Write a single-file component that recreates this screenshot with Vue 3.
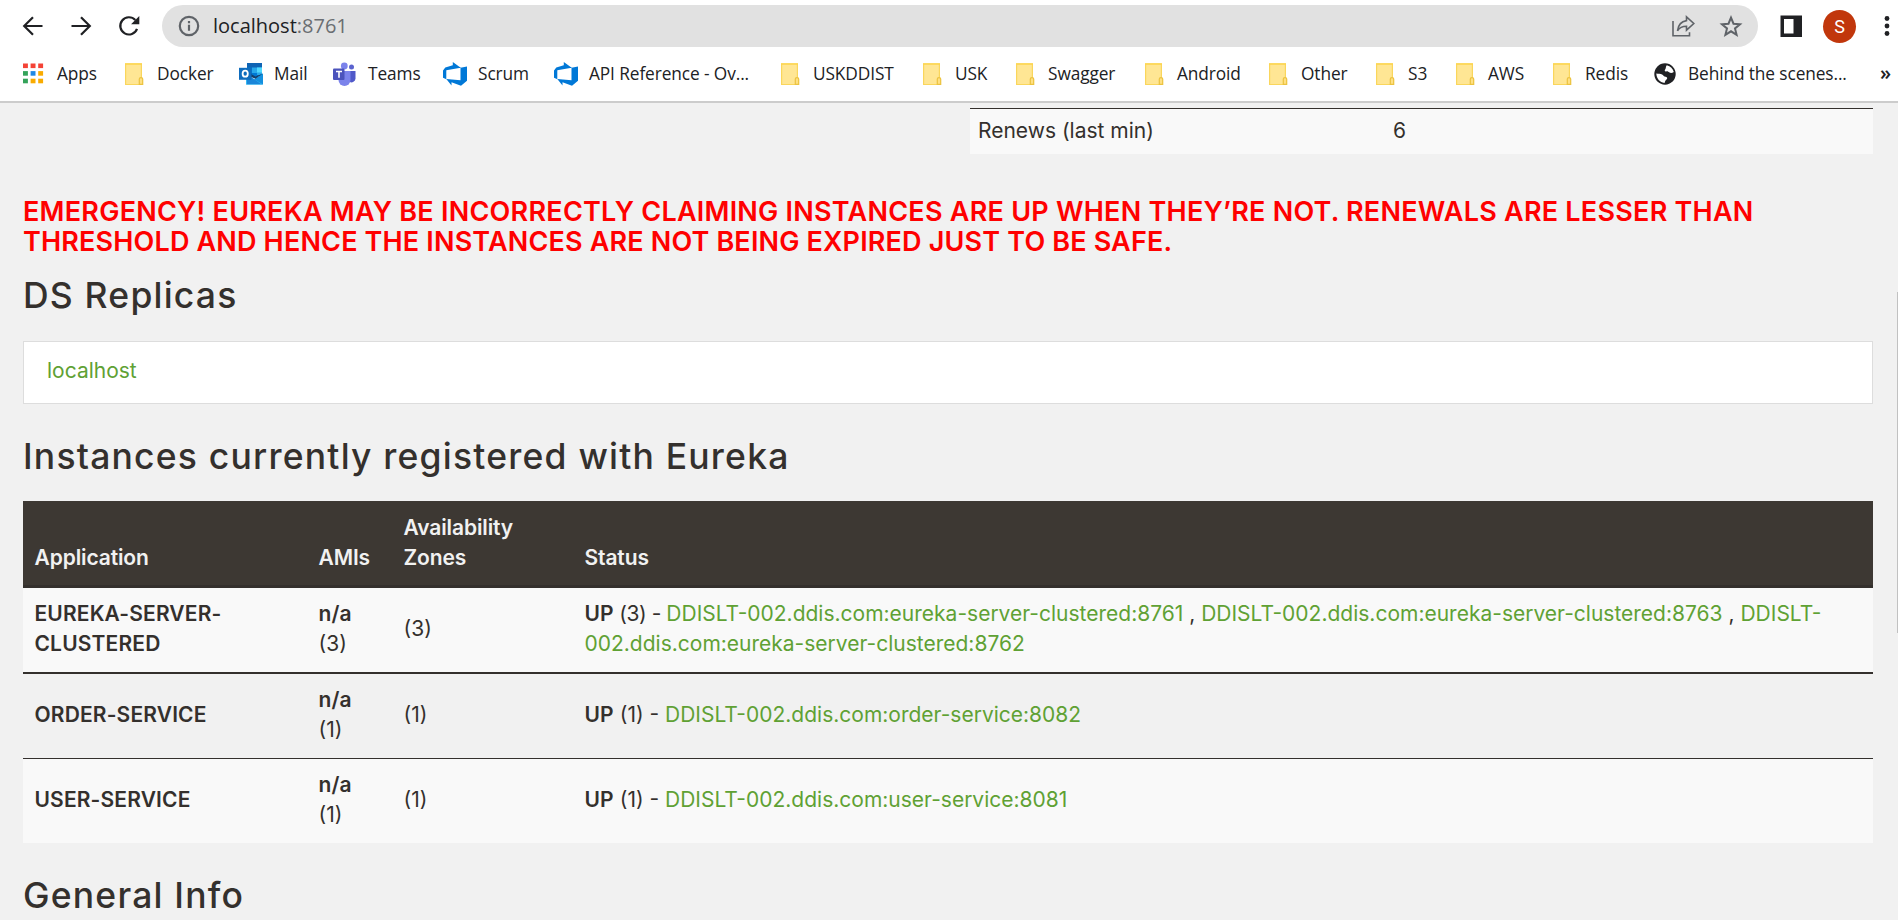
<script setup>
const bookmarks = [
  { icon: 'apps', label: 'Apps' },
  { icon: 'folder', label: 'Docker' },
  { icon: 'mail', label: 'Mail' },
  { icon: 'teams', label: 'Teams' },
  { icon: 'devops', label: 'Scrum' },
  { icon: 'devops', label: 'API Reference - Ov...' },
  { icon: 'folder', label: 'USKDDIST' },
  { icon: 'folder', label: 'USK' },
  { icon: 'folder', label: 'Swagger' },
  { icon: 'folder', label: 'Android' },
  { icon: 'folder', label: 'Other' },
  { icon: 'folder', label: 'S3' },
  { icon: 'folder', label: 'AWS' },
  { icon: 'folder', label: 'Redis' },
  { icon: 'globe', label: 'Behind the scenes...' }
]
const appDots = ['#f44336', '#f44336', '#f44336', '#34a35a', '#1e88e5', '#f9ab00', '#34a35a', '#f9ab00', '#f9ab00']

const host = 'DDISLT-002.ddis.com'
const apps = [
  { name: 'EUREKA-SERVER-CLUSTERED', count: 3, links: [8761, 8763, 8762].map(p => `${host}:eureka-server-clustered:${p}`) },
  { name: 'ORDER-SERVICE', count: 1, links: [`${host}:order-service:8082`] },
  { name: 'USER-SERVICE', count: 1, links: [`${host}:user-service:8081`] }
]
</script>

<template>
  <div class="window">
    <header class="chrome">
      <div class="toolbar">
        <svg class="ico" viewBox="0 0 24 24"><path d="M21.500 12H3.500M12 3.200 3.200 12l8.800 8.800" /></svg>
        <svg class="ico" viewBox="0 0 24 24"><path d="M2.500 12h18M12 3.200l8.800 8.800-8.800 8.800" /></svg>
        <svg class="ico" viewBox="0 0 24 24">
          <path d="M20 14.800A8.600 8.600 0 1 1 18.300 6.100" />
          <path class="solid" d="M22.300 2v8.200h-8.200z" />
        </svg>
        <div class="omnibox">
          <svg class="ico info" viewBox="0 0 24 24">
            <circle cx="12" cy="12" r="9.200" />
            <path d="M12 10.800v6M12 7v2.300" />
          </svg>
          <div class="url">localhost<span>:8761</span></div>
          <svg class="ico share" viewBox="0 0 24 24">
            <path d="M2 7v14.800h16.500v-3.500" />
            <path d="M15.500 2.800 22.800 9.500l-7.300 6.700v-4c-4.500 0-7 1.300-9 4.600.6-5.300 3.600-9.400 9-10.200z" />
          </svg>
          <svg class="ico star" viewBox="0 0 24 24">
            <path d="m12 3.600 2.500 6.100 6.500.5-5 4.200 1.600 6.400-5.600-3.500-5.600 3.500L8 14.400l-5-4.200 6.500-.5z" />
          </svg>
        </div>
        <svg class="ico panel" viewBox="0 0 24 24">
          <path class="solid" fill-rule="evenodd" d="M1.500 1.500h21.500v21.500H1.500zM5 5v14.500h9.500V5z" />
        </svg>
        <div class="avatar">S</div>
        <svg class="menu" viewBox="0 0 8 24">
          <circle cx="4" cy="4.500" r="2.400" /><circle cx="4" cy="12" r="2.400" /><circle cx="4" cy="19.500" r="2.400" />
        </svg>
      </div>

      <nav class="bookmarks">
        <div v-for="b in bookmarks" :key="b.label" class="bookmark">
          <svg v-if="b.icon === 'apps'" class="bm" viewBox="0 0 24 24">
            <rect v-for="(c, i) in appDots" :key="i" :x="1 + (i % 3) * 7.600" :y="1.500 + Math.floor(i / 3) * 7.600" width="4.900" height="4.600" :fill="c" />
          </svg>
          <svg v-else-if="b.icon === 'folder'" class="bm" viewBox="0 0 24 24">
            <path d="M3.600 2h15.800v15h1v5.500H3.600z" fill="#ffe694" stroke="#fad65c" stroke-width="1.200" />
            <path d="M3 1.900h17" stroke="#fdd44a" stroke-width="1.300" />
            <path d="M17.300 22.300v-5.200c0-2 3.400-2 3.400 0v5.200z" fill="#ffe082" stroke="#ecc340" stroke-width="1.200" />
          </svg>
          <svg v-else-if="b.icon === 'mail'" class="bm" viewBox="0 0 24 24">
            <path fill="#0f64b4" d="M8 1h15v13H8z" />
            <path fill="#28a8ea" d="M13 5.500h10V13H13z" />
            <path fill="#50d9ff" d="M18 5.500h5v5h-5z" />
            <path fill="#0078d4" d="M8 5.500h5V11H8zM13 11h5v4h-5z" />
            <path fill="#1490df" d="M7 22.500 24 11.500v11z" />
            <path fill="#35b8f1" d="m7 12 17 10.500H7z" />
            <path fill="#1a86d9" d="M8 12v10h14z" />
            <path fill="#123f6d" d="m12 12 4.500 2.500L24 11.500l-7.500 5.300L12 15z" />
            <path fill="#0f6cbd" d="M0 5.800h12.500v12H0z" />
            <ellipse cx="6.200" cy="11.700" rx="2.600" ry="3" fill="none" stroke="#fff" stroke-width="1.800" />
          </svg>
          <svg v-else-if="b.icon === 'teams'" class="bm" viewBox="0 0 24 24">
            <circle cx="18.500" cy="5" r="2.500" fill="#5b63cf" />
            <path fill="#5059c9" d="M15 9h7.500v7.500a4 4 0 0 1-6 3.300z" />
            <circle cx="11.300" cy="3.900" r="3.400" fill="#7b83eb" />
            <path fill="#7b83eb" d="M5.500 9h12v9a6 6 0 0 1-12 0z" />
            <rect y="6.500" width="11.500" height="11.500" rx="1" fill="#4b53bc" />
            <path d="M3 9.500h6M6 9.500v6.300" stroke="#fff" stroke-width="1.600" />
          </svg>
          <svg v-else-if="b.icon === 'devops'" class="bm" viewBox="0 0 24 24">
            <path fill="#0078d7" d="M24 4.500v14.200l-6 5L8.500 20.300v3.300L3.300 17l14.200 1.300V5.700zM17.700 5.800 9.800 0v3.300L2.300 5.500 0 8.500v7.200l3.300 1.500V8.300z" />
          </svg>
          <svg v-else class="bm" viewBox="0 0 24 24">
            <circle cx="12" cy="12" r="10.700" fill="#202124" />
            <path fill="#fff" d="M13.800 3.200c3.600.7 6.200 3.500 7 6.800-1.500 1-3 1.200-4.300.6-1.200-.6-1.600-1.500-3.200-1.200-1.700.3-2-1-1-2.200.7-1 .3-2.500 1.500-4zM3.300 11.500c2 .2 4.200.4 5.800 1 1.200.5 1.200 1.600 2.400 2 1.600.4 2.500.5 2.700 1.600.2 1.300-1.400 1.700-2 3-.3.700-.2 1.300-.7 1.900-4.700-.6-8-4.500-8.200-9.500z" />
          </svg>
          <span>{{ b.label }}</span>
        </div>
        <div class="more">»</div>
      </nav>
    </header>

    <main class="page">
      <div class="stats"><span>Renews (last min)</span><span>6</span></div>

      <h4 class="alert">
        <span>EMERGENCY! EUREKA MAY BE INCORRECTLY CLAIMING INSTANCES ARE UP WHEN THEY’RE NOT. RENEWALS ARE LESSER THAN</span>
        <span class="tight">THRESHOLD AND HENCE THE INSTANCES ARE NOT BEING EXPIRED JUST TO BE SAFE.</span>
      </h4>

      <h1 class="replicas">DS Replicas</h1>
      <div class="well"><a>localhost</a></div>

      <h1 class="registered">Instances currently registered with Eureka</h1>
      <table>
        <colgroup><col class="c1" /><col class="c2" /><col class="c3" /><col /></colgroup>
        <thead>
          <tr><th>Application</th><th>AMIs</th><th>Availability Zones</th><th>Status</th></tr>
        </thead>
        <tbody>
          <tr v-for="a in apps" :key="a.name">
            <td><b>{{ a.name }}</b></td>
            <td><b>n/a</b><br />({{ a.count }})</td>
            <td>({{ a.count }})</td>
            <td><span class="status"><b>UP</b> ({{ a.count }}) - </span><template v-for="(l, i) in a.links" :key="l"><template v-if="i"> , </template><a>{{ l }}</a></template></td>
          </tr>
        </tbody>
      </table>

      <h1 class="general">General Info</h1>
      <div class="scrollbar"></div>
    </main>
  </div>
</template>

<style>
body {
  margin: 0;
  overflow: hidden;
}
</style>

<style scoped>
.window {
  height: 920px;
  overflow: hidden;
  display: flex;
  flex-direction: column;
  background: #f1f1f1;
}
.chrome {
  box-sizing: border-box;
  flex: none;
  height: 103px;
  background: #fff;
  border-bottom: 2px solid #ccc;
  font-family: "Open Sans", "Noto Sans", sans-serif;
  color: #202124;
}
.toolbar {
  display: flex;
  align-items: center;
  height: 52px;
  padding-left: 21px;
}
.ico {
  flex: none;
  width: 24px;
  height: 24px;
  fill: none;
  stroke: #202124;
  stroke-width: 2.2;
}
.toolbar > .ico + .ico {
  margin-left: 24px;
}
.ico .solid {
  fill: #202124;
  stroke: none;
}
.omnibox {
  box-sizing: border-box;
  display: flex;
  align-items: center;
  width: 1596px;
  height: 42px;
  margin-left: 21px;
  padding: 0 15px;
  border-radius: 21px;
  background: #e1e1e1;
}
.omnibox .ico {
  stroke: #5f6368;
}
.url {
  flex: 1;
  margin-left: 12px;
  font-size: 20px;
  line-height: 30px;
}
.url span {
  color: #6b6e72;
}
.omnibox .share {
  stroke-width: 1.6;
}
.omnibox .star {
  margin-left: 24px;
  stroke-width: 2;
}
.toolbar > .panel {
  margin-left: 21px;
}
.avatar {
  width: 33px;
  height: 33px;
  margin-left: 20px;
  border-radius: 50%;
  background: #c1370c;
  color: #fff;
  font: 18px/33px Roboto, sans-serif;
  text-align: center;
}
.menu {
  width: 8px;
  height: 24px;
  margin-left: 27px;
  fill: #202124;
}
.bookmarks {
  display: grid;
  grid-template-columns: 100px 117px 94px 110px 111px 224px 142px 93px 129px 124px 107px 80px 97px 103px 227px auto;
  align-items: center;
  height: 44px;
  padding-left: 22px;
  font-size: 17.300px;
  letter-spacing: -0.100px;
  white-space: nowrap;
}
.bookmark {
  display: flex;
  align-items: center;
  gap: 11px;
}
.bookmark span {
  padding-bottom: 2px;
}
.bm {
  flex: none;
  width: 24px;
  height: 24px;
  fill: none;
}
.more {
  padding-bottom: 2px;
  font-size: 20px;
  font-weight: 600;
  line-height: 24px;
}

.page {
  position: relative;
  flex: 1;
  min-height: 0;
  padding: 5px 25px 0 23px;
  font-family: Inter, "Open Sans", sans-serif;
  font-size: 21px;
  line-height: 30px;
  color: #34302d;
}
.stats {
  box-sizing: border-box;
  display: grid;
  grid-template-columns: 415px 1fr;
  width: 903px;
  height: 46px;
  margin-left: 947px;
  padding: 7px 8px;
  border-top: 1px solid #34302d;
  background: #f9f9f9;
}
h1,
h4 {
  margin: 0;
}
.alert {
  margin-top: 43px;
  font-size: 27px;
  font-weight: 580;
  line-height: 30px;
  letter-spacing: 0.240px;
  white-space: nowrap;
  color: #f00;
}
.alert span {
  display: block;
}
.alert .tight {
  letter-spacing: 0.160px;
}
h1 {
  font-size: 35.500px;
  font-weight: 500;
  line-height: 40px;
  letter-spacing: 1.200px;
}
.replicas {
  margin-top: 19px;
}
.well {
  box-sizing: border-box;
  height: 63px;
  margin-top: 25px;
  padding: 14px 23px;
  border: 1px solid #ddd;
  background: #fff;
}
a {
  color: #5fa134;
}
.registered {
  margin-top: 33px;
}
table {
  width: 1850px;
  margin-top: 24px;
  border-collapse: separate;
  border-spacing: 0;
  table-layout: fixed;
}
.c1 {
  width: 284px;
}
.c2 {
  width: 85px;
}
.c3 {
  width: 181px;
}
th {
  padding: 12px 12px 12px 11.500px;
  border-bottom: 3px solid #34302d;
  background: #3d3833;
  color: #f1f1f1;
  font-weight: 600;
  letter-spacing: -0.120px;
  text-align: left;
  vertical-align: bottom;
}
td {
  padding: 11px 12px 13px 11.500px;
  vertical-align: middle;
}
b {
  font-weight: 600;
  letter-spacing: 0.150px;
}
tbody tr:nth-child(odd) td {
  background: #f9f9f9;
}
tbody tr:nth-child(1) td {
  border-bottom: 2px solid #34302d;
}
tbody tr:nth-child(2) td {
  border-bottom: 1px solid #34302d;
}
tbody tr:nth-child(1) .status {
  letter-spacing: -0.450px;
}
.general {
  margin-top: 33px;
}
.scrollbar {
  position: absolute;
  top: 189px;
  right: 0;
  width: 1px;
  height: 341px;
  background: #c1c1c1;
}
</style>
